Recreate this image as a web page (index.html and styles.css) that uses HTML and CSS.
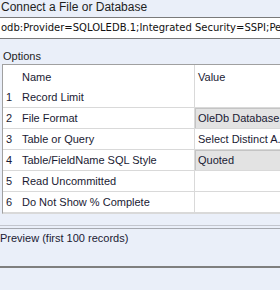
FILE: index.html
```html
<!DOCTYPE html>
<html>
<head>
    <title>Connect a File or Database</title>
    <link rel="stylesheet" href="styles.css">
</head>
<body>
    <div class="panel">
        <div class="caption">Connect a File or Database</div>
        <div class="conn">odb:Provider=SQLOLEDB.1;Integrated Security=SSPI;Persist Security Info=False</div>

        <div class="caption options">Options</div>
        <div class="grid">
            <div class="row head">
                <div class="num"></div>
                <div class="name">Name</div>
                <div class="value">Value</div>
            </div>
            <div class="row">
                <div class="num">1</div>
                <div class="name">Record Limit</div>
                <div class="value"></div>
            </div>
            <div class="row">
                <div class="num">2</div>
                <div class="name">File Format</div>
                <div class="value combo">OleDb Database</div>
            </div>
            <div class="row">
                <div class="num">3</div>
                <div class="name">Table or Query</div>
                <div class="value">Select Distinct A.*</div>
            </div>
            <div class="row">
                <div class="num">4</div>
                <div class="name">Table/FieldName SQL Style</div>
                <div class="value combo">Quoted</div>
            </div>
            <div class="row">
                <div class="num">5</div>
                <div class="name">Read Uncommitted</div>
                <div class="value"></div>
            </div>
            <div class="row">
                <div class="num">6</div>
                <div class="name">Do Not Show % Complete</div>
                <div class="value"></div>
            </div>
        </div>

        <div class="splitter"></div>
        <div class="preview">Preview (first 100 records)</div>
    </div>
</body>
</html>
```

FILE: styles.css
```css
:root {
    --back: #eaeff9;
    --line: #d9d9d9;
    --edge: #a0a0a0;
}

body {
    margin: 0;
    background: var(--back);
    font-family: 'Liberation Sans', Arial, sans-serif;
    font-size: 11px;
    color: #1a1a33;
    overflow: hidden;
}

.panel {
    width: 280px;
    overflow: hidden;
}

.caption {
    font-size: 12px;
    height: 16px;
    line-height: 15px;
    padding-left: 1px;
    color: #1e1e1e;
}

.conn {
    height: 20px;
    line-height: 20px;
    margin-top: 1px;
    padding-left: 1px;
    background: #fff;
    border-top: 1px solid #7a7a7a;
    border-bottom: 1px solid #7a7a7a;
    font-family: 'DejaVu Sans', Verdana, sans-serif;
    font-size: 10px;
    white-space: nowrap;
    color: #111;
}

.options {
    height: 25px;
    line-height: 35px;
    padding-left: 3px;
    font-size: 11px;
}

.grid {
    margin-left: 2px;
    width: 400px;
    background: #fff;
    border-top: 1px solid var(--edge);
    border-left: 1px solid var(--edge);
    border-bottom: 1px solid var(--line);
}

.row {
    display: flex;
    height: 20px;
    border-bottom: 1px solid var(--line);
    line-height: 20px;
    white-space: nowrap;
}

.row.head {
    height: 22px;
    border-bottom: none;
    line-height: 24px;
}

.num {
    width: 13px;
    padding-left: 3px;
}

.name {
    width: 172px;
    padding-left: 3px;
    border-right: 1px solid var(--line);
}

.value {
    flex: 1;
    padding-left: 3px;
}

.value.combo {
    background: #e3e3e3;
    border-left: 1px solid #c4c4c4;
    border-top: 1px solid #c4c4c4;
    line-height: 19px;
    padding-left: 2px;
}

.splitter {
    height: 2px;
    margin-top: 11px;
    border-top: 1px solid #c3c6ce;
    border-bottom: 1px solid #a6a9b0;
}

.preview {
    height: 36px;
    line-height: 16px;
    padding-top: 1px;
    border-bottom: 2px solid #7f7f7f;
}
```
